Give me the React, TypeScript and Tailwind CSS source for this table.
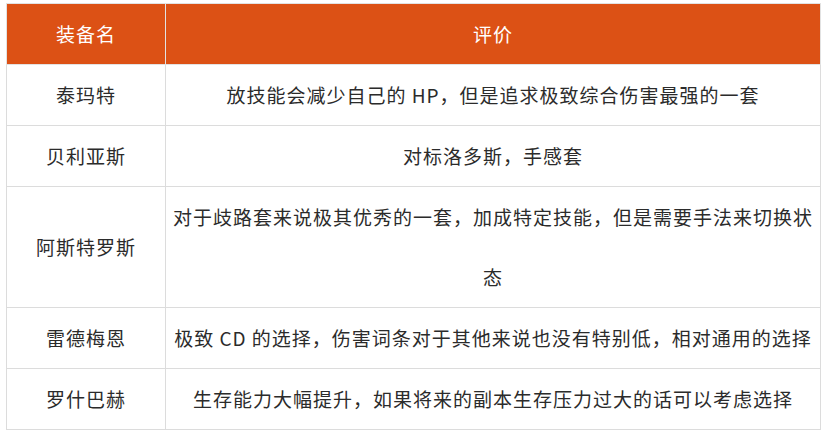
const rows: [string, string][] = [
  ["泰玛特", "放技能会减少自己的 HP，但是追求极致综合伤害最强的一套"],
  ["贝利亚斯", "对标洛多斯，手感套"],
  ["阿斯特罗斯", "对于歧路套来说极其优秀的一套，加成特定技能，但是需要手法来切换状态"],
  ["雷德梅恩", "极致 CD 的选择，伤害词条对于其他来说也没有特别低，相对通用的选择"],
  ["罗什巴赫", "生存能力大幅提升，如果将来的副本生存压力过大的话可以考虑选择"],
]

export default function App() {
  return (
    <div
      className="min-h-screen bg-white pl-[6px] pt-[3px]"
      style={{ fontFamily: '"Noto Sans CJK SC", "Microsoft YaHei", sans-serif' }}
    >
      <table className="w-[815px] table-fixed border-collapse border border-[#dcdcdc] text-[19px] tracking-[1px] text-[#2b2b2b]">
        <colgroup>
          <col className="w-[159px]" />
          <col />
        </colgroup>
        <thead>
          <tr className="bg-[#dc5115] text-white">
            <th className="h-[60px] border border-[#e2e2e2] px-[4px] text-center font-normal leading-[60px]">装备名</th>
            <th className="h-[60px] border border-[#e2e2e2] px-[4px] text-center font-normal leading-[60px]">评价</th>
          </tr>
        </thead>
        <tbody>
          {rows.map(([name, note]) => (
            <tr key={name}>
              <td className="border border-[#dcdcdc] px-[4px] text-center leading-[60px]">{name}</td>
              <td className="border border-[#dcdcdc] px-[4px] text-center leading-[60px]">{note}</td>
            </tr>
          ))}
        </tbody>
      </table>
    </div>
  )
}
